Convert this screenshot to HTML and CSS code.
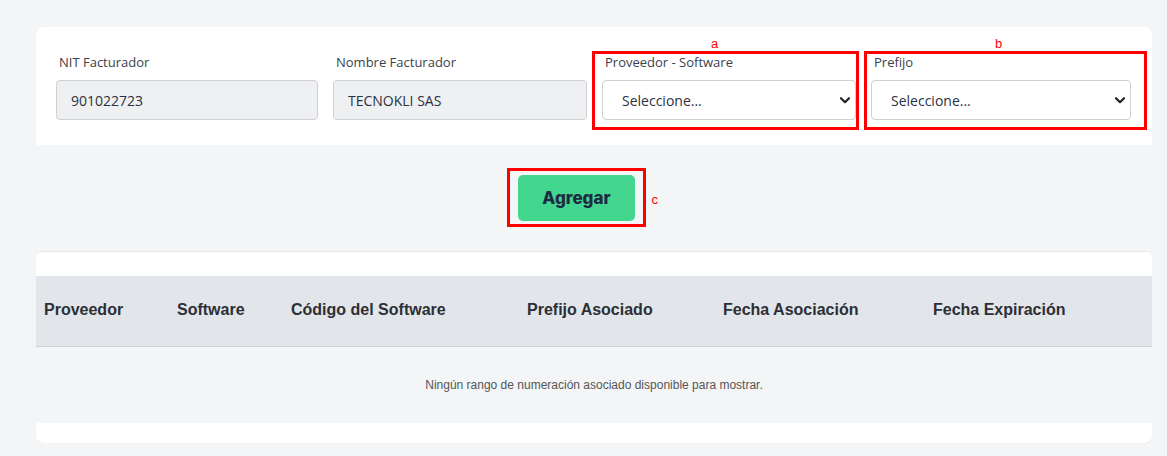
FILE: index.html
```html
<!DOCTYPE html>
<html lang="es">
<head>
<meta charset="utf-8">
<title>Asociar rango</title>
<link rel="stylesheet" href="styles.css">
</head>
<body>
<main class="page">
  <section class="form-card">
    <div class="field">
      <label class="label">NIT Facturador</label>
      <input class="input readonly" type="text" value="901022723" readonly>
    </div>
    <div class="field">
      <label class="label">Nombre Facturador</label>
      <input class="input readonly" type="text" value="TECNOKLI SAS" readonly>
    </div>
    <div class="field">
      <label class="label">Proveedor - Software</label>
      <div class="select-wrap">
        <select class="input select"><option>Seleccione...</option></select>
        <svg class="chev" width="10" height="7" viewBox="0 0 10 7"><path d="M1 1.2 L5 5.2 L9 1.2" fill="none" stroke="#222" stroke-width="2.2" stroke-linecap="round" stroke-linejoin="round"/></svg>
      </div>
    </div>
    <div class="field">
      <label class="label">Prefijo</label>
      <div class="select-wrap">
        <select class="input select"><option>Seleccione...</option></select>
        <svg class="chev" width="10" height="7" viewBox="0 0 10 7"><path d="M1 1.2 L5 5.2 L9 1.2" fill="none" stroke="#222" stroke-width="2.2" stroke-linecap="round" stroke-linejoin="round"/></svg>
      </div>
    </div>
    <div class="mark mark-a"><span class="mark-tag tag-a">a</span></div>
    <div class="mark mark-b"><span class="mark-tag tag-b">b</span></div>
  </section>

  <div class="action-row">
    <div class="btn-holder">
      <button class="btn-add" type="button">Agregar</button>
      <div class="mark mark-c"><span class="mark-tag side">c</span></div>
    </div>
  </div>

  <section class="table-card">
    <div class="table-top"></div>
    <div class="thead">
      <div class="th">Proveedor</div>
      <div class="th">Software</div>
      <div class="th">Código del Software</div>
      <div class="th">Prefijo Asociado</div>
      <div class="th">Fecha Asociación</div>
      <div class="th">Fecha Expiración</div>
    </div>
    <div class="empty">Ningún rango de numeración asociado disponible para mostrar.</div>
    <div class="table-foot"></div>
  </section>
</main>
</body>
</html>
```

FILE: styles.css
```css
* { box-sizing: border-box; }
html, body { margin: 0; padding: 0; }
body {
  background: #f4f5f7;
  font-family: "Open Sans", "Noto Sans", sans-serif;
  color: #2b3140;
}
.page {
  padding: 27px 15px 0 36px;
}
.form-card {
  position: relative;
  background: #fff;
  border-radius: 8px 8px 0 0;
  padding: 26px 19px 25px 20px;
  display: grid;
  grid-template-columns: 262px 254px 254px 260px;
  column-gap: 15px;
}
.field { display: flex; flex-direction: column; }
.label {
  font-size: 13px;
  line-height: 18px;
  color: #3a3f4b;
  padding-left: 3px;
  margin-bottom: 9px;
}
.input {
  height: 40px;
  width: 100%;
  border: 1px solid #cfd0d3;
  border-radius: 4px;
  font-family: "Open Sans", "Noto Sans", sans-serif;
  font-size: 14px;
  color: #2b3140;
  padding: 0 14px;
  background: #fff;
  outline: none;
}
.input.readonly { background: #eff0f2; }
.select-wrap { position: relative; }
.select {
  appearance: none;
  -webkit-appearance: none;
  padding-left: 19px;
}
.chev { position: absolute; right: 6px; top: 17px; pointer-events: none; }

.mark {
  position: absolute;
  border: 3px solid #ff0000;
  pointer-events: none;
}
.mark-tag {
  position: absolute;
  top: -17px;
  color: #ff0000;
  font-family: "Liberation Sans", Arial, sans-serif;
  font-size: 13px;
  line-height: 14px;
}
.tag-a { left: 116px; }
.tag-b { left: 128px; }
.mark-tag.side {
  top: 22px;
  right: -15px;
}
.mark-a { left: 556px; top: 24px; width: 267px; height: 79px; }
.mark-b { left: 828px; top: 24px; width: 283px; height: 79px; }

.action-row {
  padding: 30px 0 30px 482px;
  display: flex;
}
.btn-holder { position: relative; }
.btn-add {
  display: block;
  width: 117px;
  height: 46px;
  border: none;
  border-radius: 5px;
  background: #42d68e;
  color: #1f2a44;
  font-family: Inter, "Liberation Sans", sans-serif;
  font-weight: 800;
  font-size: 17px;
}
.mark-c { left: -11px; top: -7px; width: 139px; height: 59px; }

.table-card {
  border-top: 1px solid #e4e6e9;
  border-radius: 6px 6px 8px 8px;
  overflow: hidden;
  box-shadow: 0 2px 1px -1px rgba(0,0,0,0.12);
  background: #fff;
}
.table-top { height: 24px; background: #fff; }
.thead {
  display: grid;
  grid-template-columns: 133px 114px 236px 196px 210px 1fr;
  padding-left: 8px;
  padding-bottom: 2px;
  height: 71px;
  align-items: center;
  background: #e2e6ea;
  border-bottom: 1px solid #cdd0d4;
}
.th {
  font-family: "Liberation Sans", Arial, sans-serif;
  font-weight: 700;
  font-size: 16px;
  color: #2d2f36;
}
.empty {
  background: #f4f5f7;
  height: 76px;
  display: flex;
  align-items: center;
  justify-content: center;
  font-family: "Liberation Sans", Arial, sans-serif;
  font-size: 12px;
  color: #555;
}
.table-foot { height: 20px; background: #fff; }
```
